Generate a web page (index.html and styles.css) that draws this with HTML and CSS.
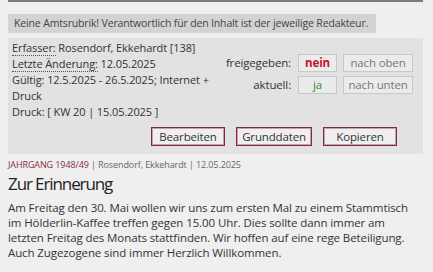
FILE: index.html
```html
<!DOCTYPE html>
<html>
  <head>
    <meta charset="utf-8">
    <title>Zur Erinnerung</title>
    <link rel="stylesheet" href="styles.css">
  </head>
  <body>
    <div class="wrap">
      <div class="hint">Keine Amtsrubrik! Verantwortlich für den Inhalt ist der jeweilige Redakteur.</div>

      <div class="panel">
        <div class="top">
          <div class="info">
            <div><span class="lbl">Erfasser:</span> Rosendorf, Ekkehardt [138]</div>
            <div><span class="lbl">Letzte Änderung:</span> 12.05.2025</div>
            <div>Gültig: 12.5.2025 - 26.5.2025; Internet + Druck</div>
            <div>Druck: [ KW 20 | 15.05.2025 ]</div>
          </div>
          <div class="status">
            <div class="row">
              <span class="key">freigegeben:</span>
              <span class="flag no">nein</span>
              <span class="move">nach oben</span>
            </div>
            <div class="row">
              <span class="key">aktuell:</span>
              <span class="flag yes">ja</span>
              <span class="move">nach unten</span>
            </div>
          </div>
        </div>
        <div class="actions">
          <button class="btn">Bearbeiten</button>
          <button class="btn">Grunddaten</button>
          <button class="btn">Kopieren</button>
        </div>
      </div>

      <div class="meta"><span class="rubrik">JAHRGANG 1948/49</span> | Rosendorf, Ekkehardt | 12.05.2025</div>
      <h2>Zur Erinnerung</h2>
      <p>Am Freitag den 30. Mai wollen wir uns zum ersten Mal zu einem Stammtisch im Hölderlin-Kaffee treffen gegen 15.00 Uhr. Dies sollte dann immer am letzten Freitag des Monats stattfinden. Wir hoffen auf eine rege Beteiligung. Auch Zugezogene sind immer Herzlich Willkommen.</p>
    </div>
  </body>
</html>
```

FILE: styles.css
```css
  *{
    margin: 0;
    padding: 0;
    box-sizing: border-box;
  }
  body{
    background: #efefef;
    font-family: "Open Sans", "DejaVu Sans", sans-serif;
    color: #333;
  }
  .wrap{
    margin: 0 10px 0 8px;
    border-top: 2px solid #7c7c7c;
    padding-top: 8px;
  }
  .hint{
    display: inline-block;
    background: #d3d3d3;
    font-size: 10.5px;
    letter-spacing: -0.15px;
    line-height: 19px;
    padding: 0 8px 0 6px;
    color: #444;
  }
  .panel{
    background: #e2e2e2;
    margin-top: 5px;
    padding: 2px 10px 8px 4px;
    font-size: 11.5px;
    letter-spacing: -0.15px;
    line-height: 16px;
  }
  .top{
    display: flex;
  }
  .info{
    width: 205px;
    font-size: 11px;
    letter-spacing: -0.1px;
  }
  .lbl{
    border-bottom: 1px dotted #555;
  }
  .status{
    flex: 1;
    padding-top: 14px;
    display: flex;
    flex-direction: column;
    align-items: flex-end;
    gap: 4px;
  }
  .row{
    display: flex;
    align-items: center;
  }
  .key{
    margin-right: 7px;
  }
  .flag, .move{
    border: 1px solid #c8c8c8;
    background: #ebebeb;
    height: 18px;
    line-height: 16px;
    text-align: center;
    color: #777;
  }
  .flag{
    width: 39px;
    margin-right: 6px;
  }
  .move{
    width: 70px;
  }
  .no{
    color: #c8102e;
    font-weight: bold;
  }
  .yes{
    color: #2e8b2e;
  }
  .actions{
    display: flex;
    justify-content: flex-end;
    gap: 11px;
    padding-right: 16px;
    margin-top: 7px;
  }
  .btn{
    font-family: inherit;
    font-size: 11.5px;
    letter-spacing: -0.15px;
    color: #333;
    background: #efefef;
    border: 1px solid #7b2d3d;
    box-shadow: inset 0 0 0 1px #c9a0a8;
    height: 19px;
    line-height: 17px;
    width: 74px;
  }
  .btn:nth-child(2){
    width: 76px;
  }
  .meta{
    font-size: 9px;
    letter-spacing: -0.1px;
    color: #666;
    margin-top: 5px;
    line-height: 12px;
  }
  .rubrik{
    color: #8a2c3c;
  }
  h2{
    font-weight: normal;
    font-size: 17px;
    letter-spacing: -1.1px;
    line-height: 20px;
    margin-top: 3px;
    color: #222;
  }
  p{
    font-size: 11.5px;
    letter-spacing: -0.1px;
    line-height: 15px;
    margin-top: 6px;
    padding-right: 8px;
    color: #333;
  }
```
